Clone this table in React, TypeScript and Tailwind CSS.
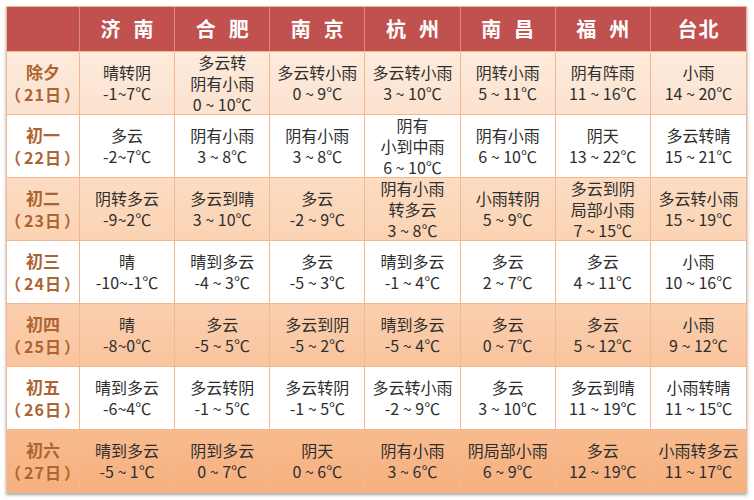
import React from "react";

const cities = ["济南", "合肥", "南京", "杭州", "南昌", "福州", "台北"];

type Row = { day: string; date: string; cells: string[][] };

const rows: Row[] = [
  {
    day: "除夕",
    date: "21日",
    cells: [
      ["晴转阴", "-1~7℃"],
      ["多云转", "阴有小雨", "0 ~ 10℃"],
      ["多云转小雨", "0 ~ 9℃"],
      ["多云转小雨", "3 ~ 10℃"],
      ["阴转小雨", "5 ~ 11℃"],
      ["阴有阵雨", "11 ~ 16℃"],
      ["小雨", "14 ~ 20℃"],
    ],
  },
  {
    day: "初一",
    date: "22日",
    cells: [
      ["多云", "-2~7℃"],
      ["阴有小雨", "3 ~ 8℃"],
      ["阴有小雨", "3 ~ 8℃"],
      ["阴有", "小到中雨", "6 ~ 10℃"],
      ["阴有小雨", "6 ~ 10℃"],
      ["阴天", "13 ~ 22℃"],
      ["多云转晴", "15 ~ 21℃"],
    ],
  },
  {
    day: "初二",
    date: "23日",
    cells: [
      ["阴转多云", "-9~2℃"],
      ["多云到晴", "3 ~ 10℃"],
      ["多云", "-2 ~ 9℃"],
      ["阴有小雨", "转多云", "3 ~ 8℃"],
      ["小雨转阴", "5 ~ 9℃"],
      ["多云到阴", "局部小雨", "7 ~ 15℃"],
      ["多云转小雨", "15 ~ 19℃"],
    ],
  },
  {
    day: "初三",
    date: "24日",
    cells: [
      ["晴", "-10~-1℃"],
      ["晴到多云", "-4 ~ 3℃"],
      ["多云", "-5 ~ 3℃"],
      ["晴到多云", "-1 ~ 4℃"],
      ["多云", "2 ~ 7℃"],
      ["多云", "4 ~ 11℃"],
      ["小雨", "10 ~ 16℃"],
    ],
  },
  {
    day: "初四",
    date: "25日",
    cells: [
      ["晴", "-8~0℃"],
      ["多云", "-5 ~ 5℃"],
      ["多云到阴", "-5 ~ 2℃"],
      ["晴到多云", "-5 ~ 4℃"],
      ["多云", "0 ~ 7℃"],
      ["多云", "5 ~ 12℃"],
      ["小雨", "9 ~ 12℃"],
    ],
  },
  {
    day: "初五",
    date: "26日",
    cells: [
      ["晴到多云", "-6~4℃"],
      ["多云转阴", "-1 ~ 5℃"],
      ["多云转阴", "-1 ~ 5℃"],
      ["多云转小雨", "-2 ~ 9℃"],
      ["多云", "3 ~ 10℃"],
      ["多云到晴", "11 ~ 19℃"],
      ["小雨转晴", "11 ~ 15℃"],
    ],
  },
  {
    day: "初六",
    date: "27日",
    cells: [
      ["晴到多云", "-5 ~ 1℃"],
      ["阴到多云", "0 ~ 7℃"],
      ["阴天", "0 ~ 6℃"],
      ["阴有小雨", "3 ~ 6℃"],
      ["阴局部小雨", "6 ~ 9℃"],
      ["多云", "12 ~ 19℃"],
      ["小雨转多云", "11 ~ 17℃"],
    ],
  },
];

const rowBg = [
  "bg-gradient-to-b from-[#fdebdc] to-[#fce2cf]",
  "bg-white",
  "bg-gradient-to-b from-[#fcdcc2] to-[#fbd3b3]",
  "bg-white",
  "bg-gradient-to-b from-[#fbcfae] to-[#f9c49e]",
  "bg-white",
  "bg-gradient-to-b from-[#f8bb8e] to-[#f6b080]",
];

export default function App() {
  return (
    <div
      className="w-[754px] h-[500px] bg-white p-[6px]"
      style={{ fontFamily: '"Noto Sans CJK SC", "Noto Sans", sans-serif' }}
    >
      <div className="w-[741px] h-[487px] grid grid-cols-[73px_repeat(7,minmax(0,1fr))] grid-rows-[44px_repeat(7,minmax(0,1fr))] border border-[#f1b891] shadow-[0_2px_3px_rgba(0,0,0,0.35)]">
        <div className="bg-[#c1514e] border-r border-[#dc8a80]" />
        {cities.map((c, i) => (
          <div
            key={c}
            className={`bg-[#c1514e] flex items-center justify-center text-white font-bold text-[20px] ${
              i < 6 ? "border-r border-[#dc8a80]" : ""
            }`}
          >
            {c === "台北" ? (
              <span className="tracking-[1px]">{c}</span>
            ) : (
              <span className="tracking-[13px] pl-[13px]">{c}</span>
            )}
          </div>
        ))}
        {rows.map((r, ri) => (
          <React.Fragment key={r.day}>
            <div
              className={`${rowBg[ri]} flex flex-col items-center justify-center border-r border-t border-[#f2b88f] text-[#ad6430] font-bold`}
            >
              <div className="text-[17px] leading-[22px]">{r.day}</div>
              <div className="text-[16px] leading-[22px] tracking-[1px] whitespace-nowrap">
                <span className="mr-[2px]">（</span>
                {r.date}
                <span className="ml-[2px]">）</span>
              </div>
            </div>
            {r.cells.map((lines, ci) => (
              <div
                key={ci}
                className={`${rowBg[ri]} flex flex-col items-center justify-center border-t border-[#f2b88f] text-[#2e2e2e] text-[16px] leading-[21px] ${
                  ci < 6 ? "border-r" : ""
                }`}
              >
                {lines.map((l, li) => (
                  <div key={li} className="whitespace-nowrap">
                    {l}
                  </div>
                ))}
              </div>
            ))}
          </React.Fragment>
        ))}
      </div>
    </div>
  );
}
